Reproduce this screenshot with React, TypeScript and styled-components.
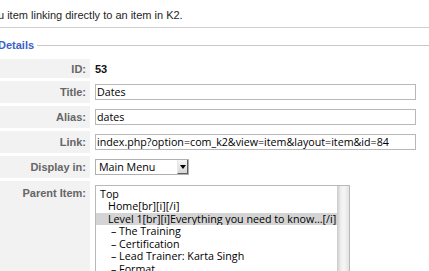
import React from "react";
import styled, { createGlobalStyle } from "styled-components";

const Global = createGlobalStyle`
  html, body { margin: 0; padding: 0; background: #fff; overflow: hidden; }
  body { width: 429px; height: 271px; }
`;

const Page = styled.div`
  width: 429px;
  height: 271px;
  overflow: hidden;
  font-family: "Liberation Sans", Arial, sans-serif;
`;

const Intro = styled.p`
  margin: 0;
  padding: 8px 0 5px 0;
  margin-left: -2px;
  font-size: 11px;
  line-height: 14px;
  color: #1e1e1e;
  border-bottom: 1px solid #cfcfcf;
  white-space: nowrap;
`;

const LegendRow = styled.div`
  display: flex;
  align-items: center;
  margin-top: 10px;
  height: 14px;
`;

const Legend = styled.span`
  margin-left: -2px;
  font-size: 11px;
  line-height: 14px;
  font-weight: bold;
  color: #3d5fc6;
`;

const LegendLine = styled.div`
  flex: 1;
  height: 1px;
  margin-left: 3px;
  background: #c8c8c8;
`;

const Form = styled.div`
  display: grid;
  grid-template-columns: 90px 1fr;
  row-gap: 3px;
  margin-top: 7px;
`;

const Label = styled.div<{ $top?: boolean; $h: number }>`
  background: #f2f2f2;
  min-height: ${(p) => p.$h}px;
  display: flex;
  align-items: ${(p) => (p.$top ? "flex-start" : "center")};
  justify-content: flex-end;
  padding: ${(p) => (p.$top ? "5px 4px 0 0" : "0 4px 0 0")};
  box-sizing: border-box;
  font-size: 11px;
  line-height: 14px;
  font-weight: bold;
  color: #666;
`;

const Value = styled.div<{ $h: number }>`
  min-height: ${(p) => p.$h}px;
  display: flex;
  align-items: center;
  padding-left: 5px;
  box-sizing: border-box;
`;

const IdText = styled.span`
  font-size: 11px;
  font-weight: bold;
  color: #111;
`;

const TextInput = styled.div`
  width: 321px;
  height: 16px;
  box-sizing: border-box;
  border: 1px solid #b8b8b8;
  padding: 0 1px;
  font-family: "Open Sans", sans-serif;
  font-size: 10.7px;
  line-height: 14px;
  color: #000;
  white-space: nowrap;
  overflow: hidden;
`;

const Select = styled.div`
  width: 94px;
  height: 16px;
  box-sizing: border-box;
  border: 1px solid #b0b0b0;
  display: flex;
  align-items: stretch;
  font-family: "Open Sans", sans-serif;
  font-size: 10.7px;
  line-height: 14px;
  color: #000;
`;

const SelectText = styled.span`
  flex: 1;
  padding-left: 3px;
`;

const SelectButton = styled.span`
  width: 11px;
  box-sizing: border-box;
  background: linear-gradient(#f6f6f6, #d6d6d6);
  border-left: 1px solid #e8e8e8;
  border-right: 1px solid #5e5e5e;
  border-bottom: 1px solid #5e5e5e;
  display: flex;
  align-items: center;
  justify-content: center;
`;

const Arrow = styled.span`
  width: 0;
  height: 0;
  border-left: 3px solid transparent;
  border-right: 3px solid transparent;
  border-top: 4px solid #000;
  margin-top: 1px;
`;

const ParentValue = styled.div`
  padding: 4px 0 0 5px;
`;

const ListBox = styled.div`
  width: 255px;
  height: 120px;
  box-sizing: border-box;
  border: 1px solid #b8b8b8;
  display: flex;
  font-family: "Open Sans", sans-serif;
  font-size: 10.7px;
  color: #000;
`;

const Options = styled.div`
  flex: 1;
  padding-top: 1.5px;
`;

const Option = styled.div<{ $indent: number; $selected?: boolean }>`
  height: 12.5px;
  line-height: 12.5px;
  padding-left: ${(p) => p.$indent}px;
  background: ${(p) => (p.$selected ? "#d4d4d4" : "transparent")};
  white-space: nowrap;
  overflow: hidden;
`;

const ScrollTrack = styled.div`
  width: 11px;
  background: linear-gradient(to right, #d2d2d2, #eeeeee 25%, #f6f6f6 55%, #e2e2e2);
  border-left: 1px solid #cfcfcf;
`;

const options: { text: string; indent: number; selected?: boolean }[] = [
  { text: "Top", indent: 4 },
  { text: "Home[br][i][/i]", indent: 12 },
  { text: "Level 1[br][i]Everything you need to know...[/i]", indent: 12, selected: true },
  { text: "– The Training", indent: 15 },
  { text: "– Certification", indent: 15 },
  { text: "– Lead Trainer: Karta Singh", indent: 15 },
  { text: "– Format", indent: 15 },
];

export default function App() {
  return (
    <Page>
      <Global />
      <Intro>u item linking directly to an item in K2.</Intro>
      <LegendRow>
        <Legend>Details</Legend>
        <LegendLine />
      </LegendRow>
      <Form>
        <Label $h={19}>ID:</Label>
        <Value $h={19}>
          <IdText>53</IdText>
        </Value>

        <Label $h={22}>Title:</Label>
        <Value $h={22}>
          <TextInput>Dates</TextInput>
        </Value>

        <Label $h={22}>Alias:</Label>
        <Value $h={22}>
          <TextInput>dates</TextInput>
        </Value>

        <Label $h={22}>Link:</Label>
        <Value $h={22}>
          <TextInput>index.php?option=com_k2&amp;view=item&amp;layout=item&amp;id=84</TextInput>
        </Value>

        <Label $h={22}>Display in:</Label>
        <Value $h={22}>
          <Select>
            <SelectText>Main Menu</SelectText>
            <SelectButton>
              <Arrow />
            </SelectButton>
          </Select>
        </Value>

        <Label $h={100} $top>
          Parent Item:
        </Label>
        <ParentValue>
          <ListBox>
            <Options>
              {options.map((o) => (
                <Option key={o.text} $indent={o.indent} $selected={o.selected}>
                  {o.text}
                </Option>
              ))}
            </Options>
            <ScrollTrack />
          </ListBox>
        </ParentValue>
      </Form>
    </Page>
  );
}
